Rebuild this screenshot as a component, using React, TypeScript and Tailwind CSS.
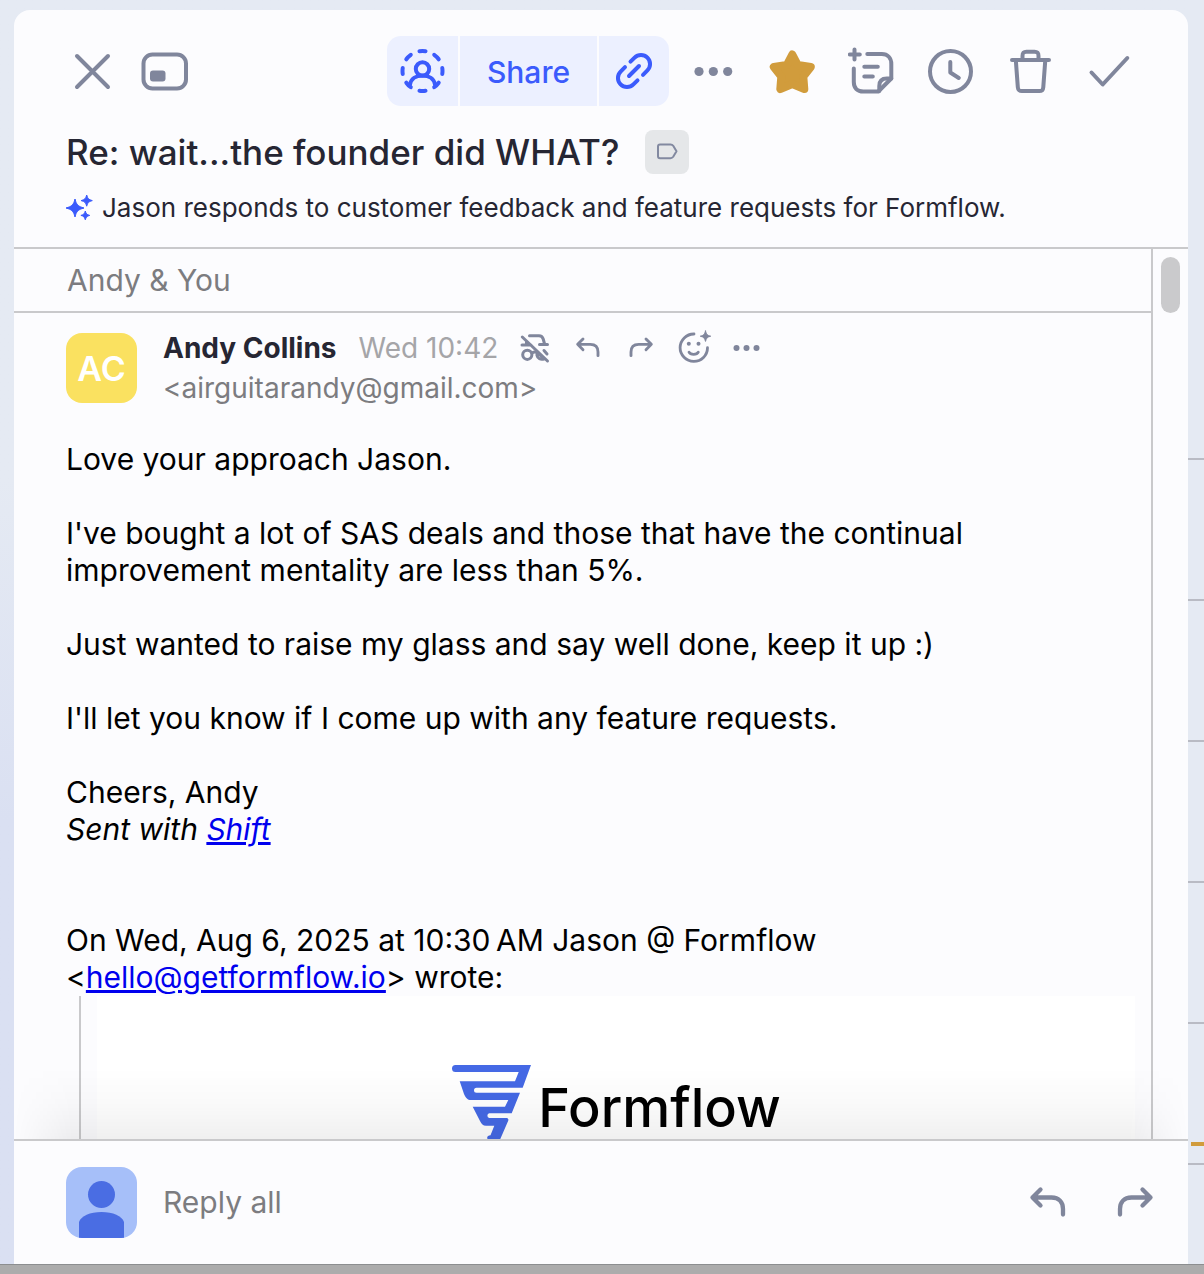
import type { ReactNode } from 'react';

const rows = [1, 2, 3, 4, 5];

function ReplyArrow({ className, flip }: { className: string; flip?: boolean }) {
  return (
    <svg className={className} viewBox="0 0 48 48" fill="none" stroke="currentColor" strokeWidth="4.3" strokeLinecap="round" strokeLinejoin="round">
      <g transform={flip ? 'translate(48 0) scale(-1 1)' : undefined}>
        <path d="M16.5 10.5 8.5 18.5l8 8M8.5 18.5h19C35 18.5 39 23 39 30v5.5" />
      </g>
    </svg>
  );
}

function Icon({ children }: { children: ReactNode }) {
  return (
    <svg className="size-12" viewBox="0 0 48 48" fill="none" stroke="currentColor" strokeWidth="4" strokeLinecap="round" strokeLinejoin="round">
      {children}
    </svg>
  );
}

function ToolButton({ label, children }: { label: string; children: ReactNode }) {
  return (
    <button aria-label={label} className="w-[79px] h-[70px] flex items-center justify-center">
      <Icon>{children}</Icon>
    </button>
  );
}

function MessageButton({ label, children }: { label: string; children: ReactNode }) {
  return (
    <button aria-label={label} className="w-[53px] h-8 flex items-center justify-center text-[#80869c]">
      {children}
    </button>
  );
}

function Toolbar() {
  return (
    <div className="flex items-center pl-[54px] pr-10 text-[#80869c]">
      <div className="flex gap-6">
        <button aria-label="Close">
          <Icon><path d="M9 9 40 40M40 9 9 40" /></Icon>
        </button>
        <button aria-label="Pop out">
          <Icon>
            <rect x="3.5" y="7.500" width="42.5" height="34" rx="9" />
            <rect x="10" y="23.500" width="15.5" height="11" rx="3" fill="currentColor" stroke="none" />
          </Icon>
        </button>
      </div>

      <div className="ml-auto mr-[5px] flex gap-0.5 rounded-[14px] overflow-hidden text-[#3b5bfc]">
        <button aria-label="Assign" className="w-[71px] h-[70px] bg-[#ecf0ff] flex items-center justify-center">
          <Icon>
            <circle cx="23.500" cy="24" r="20" pathLength="160" strokeDasharray="8 12" strokeDashoffset="4" />
            <circle cx="23.500" cy="22" r="6.700" />
            <path d="M11 37.500c1-5.500 6-9 12.500-9S35 32 36 37.500" />
          </Icon>
        </button>
        <button className="w-[137px] h-[70px] bg-[#ecf0ff] text-[30px] font-medium pt-[3px]">Share</button>
        <button aria-label="Copy link" className="w-[70px] h-[70px] bg-[#ecf0ff] flex items-center justify-center">
          <Icon>
            <path d="M20.500 14.700 24.600 10.600A9 9 0 0 1 37.400 23.400L33 27.800M27.500 33.300 23.400 37.400A9 9 0 0 1 10.600 24.600L15 20.200M19 29 29 19" />
          </Icon>
        </button>
      </div>

      <ToolButton label="More">
        <g fill="currentColor" stroke="none">
          <circle cx="9" cy="24.500" r="4.600" />
          <circle cx="23.300" cy="24.500" r="4.600" />
          <circle cx="37.700" cy="24.500" r="4.600" />
        </g>
      </ToolButton>
      <ToolButton label="Star">
        <path d="M23.300 7.500 28.800 18 41.800 20 34.300 29.500 35.300 42 23.300 37 11.300 42 12.300 29.500 4.800 20 17.800 18Z" fill="#d19c3c" stroke="#d19c3c" strokeWidth="8" />
      </ToolButton>
      <ToolButton label="Add note">
        <path d="M6.500 2.500v10M1.800 7.500h10M19.300 7h14.500c6 0 9.500 4 9.500 10v14.500l-13 13H15.300c-6 0-9.500-3.500-9.500-9.500V21.500" />
        <path d="M16.300 19.700h13.500M16.300 29.500h8.500M43.300 31.500h-4.500c-5 0-7.500 2.500-7.500 7.500v5" />
      </ToolButton>
      <ToolButton label="Snooze">
        <circle cx="23.500" cy="24.500" r="20.500" />
        <path d="M23.300 15v10.500l8.500 5.500" />
      </ToolButton>
      <ToolButton label="Delete">
        <path d="M6 13h37M9.800 13l2 27c.2 3 1.200 4 4 4h17.500c2.800 0 3.800-1 4-4l2-27M16.500 13V9c0-3 1-4.300 4-4.300h8c3 0 4 1.300 4 4.300v4" />
      </ToolButton>
      <ToolButton label="Mark done">
        <path d="M6.500 25.500 17.700 37.500 42.300 11" />
      </ToolButton>
    </div>
  );
}

function MessageHeader() {
  return (
    <div className="flex items-start gap-[26px]">
      <div className="mt-[5px] w-[71px] h-[70px] shrink-0 rounded-2xl bg-[#fae160] text-white text-[34px] font-semibold flex items-center justify-center">AC</div>
      <div>
        <div className="flex items-center h-10">
          <span className="text-[28px] font-bold text-[#262633]">Andy Collins</span>
          <time className="ml-[22px] mr-[10px] text-[28px] text-[#a5a5a8]">Wed 10:42</time>
          <MessageButton label="Trackers blocked">
            <svg className="size-8" viewBox="0 0 32 32" fill="none" stroke="currentColor" strokeWidth="3" strokeLinecap="round" strokeLinejoin="round">
              <path d="M3.300 5 28.500 29M3 13h9M20.500 12.500h8M10.500 3.700h9.500c2.700 0 3.500 1 4.200 3.300l1.500 5.500M7.500 9.500v3" />
              <circle cx="8.300" cy="22.800" r="4.600" />
              <path d="M13 21c2-1.300 3.500-1.300 5-.2v2.700c.6 3 3.500 4.500 7 3.500l-5.500-5.500M25 18.500l3 3.500" />
            </svg>
          </MessageButton>
          <MessageButton label="Reply">
            <ReplyArrow className="size-8" />
          </MessageButton>
          <MessageButton label="Forward">
            <ReplyArrow className="size-8" flip />
          </MessageButton>
          <MessageButton label="Add reaction">
            <svg className="size-8 overflow-visible" viewBox="0 0 32 32" fill="none" stroke="currentColor" strokeWidth="2.8" strokeLinecap="round">
              <path d="M16 2A13.700 13.700 0 1 0 29.500 15.700M11 20.200c1.500 3 7.800 3 9.300 0" />
              <g fill="currentColor" stroke="none">
                <circle cx="10.800" cy="11.800" r="2" />
                <circle cx="20.500" cy="11.800" r="2" />
                <path d="M27.500-1c.9 3.500 1.700 4.300 5.200 5.200-3.500.9-4.300 1.700-5.200 5.200-.9-3.500-1.700-4.300-5.200-5.200 3.500-.9 4.300-1.700 5.200-5.200Z" stroke="currentColor" strokeWidth="1" />
              </g>
            </svg>
          </MessageButton>
          <MessageButton label="More actions">
            <svg className="size-8" viewBox="0 0 32 32" fill="currentColor">
              <circle cx="5.500" cy="16" r="3" />
              <circle cx="15.500" cy="16" r="3" />
              <circle cx="25.500" cy="16" r="3" />
            </svg>
          </MessageButton>
        </div>
        <div className="h-10 flex items-center text-[28px] text-[#7c7c80]">&lt;airguitarandy@gmail.com&gt;</div>
      </div>
    </div>
  );
}

function FormflowLogo() {
  return (
    <div className="flex items-start justify-center gap-1.5">
      <svg className="w-[81px] h-[76px]" viewBox="0 0 81 76" fill="#4569e5">
        <path d="M4.500 1H80L71.700 23.700H25.500a2.500 2.500 0 0 0 0 5H69L60.700 49.300H38.300a2.400 2.400 0 0 0 0 4.700H55c2 0 2.800 1 2.200 2.700L49.300 75H36.500c-1-2 .5-3.500 3-3.700L43.300 61.700H35c-3 0-4.500-1.500-6-4.700L21.700 42.700H54L57.300 36H20c-3.500 0-5-2-7-6L8.700 17.300H64L67.700 8H4.500a3.500 3.500 0 0 1 0-7Z" />
      </svg>
      <span className="mt-[11px] text-[54px] leading-[66px] font-medium text-black">Formflow</span>
    </div>
  );
}

export default function App() {
  return (
    <div className="h-screen flex flex-col overflow-hidden bg-[#acacac] font-['Inter',sans-serif]">
      <div className="flex-1 min-h-0 flex pl-3.5 bg-linear-to-b from-[#e5eaf3] from-38% to-[#dae0f2] to-65% border-b border-[#8c8e90]">
        <main className="flex-1 min-w-0 mt-2.5 flex flex-col rounded-t-2xl bg-[#fcfcfe]">
          <header className="pt-[26px] pb-[23px] border-b-2 border-[#c9c9cb]">
            <Toolbar />
            <div className="mt-6 pl-[52px] flex items-center gap-[26px]">
              <h1 className="text-[35px] leading-11 font-medium text-[#262633]">Re: wait...the founder did WHAT?</h1>
              <button aria-label="Labels" className="size-11 rounded-lg bg-[#e5e7e9] text-[#8289a0]">
                <svg className="size-11" viewBox="0 0 44 44" fill="none" stroke="currentColor" strokeWidth="2" strokeLinejoin="round">
                  <path d="M15 14.500h10.500c1.300 0 2 .3 2.700 1.300l3.300 5.500-3.300 5.500c-.7 1-1.400 1.400-2.700 1.400H15c-1.300 0-2-.7-2-2v-9.700c0-1.300.7-2 2-2Z" />
                </svg>
              </button>
            </div>
            <p className="mt-[18px] pl-[52px] flex items-center gap-2 text-[26px] leading-8 text-[#262633]">
              <svg className="size-7 shrink-0" viewBox="0 0 28 28" fill="#3b5bfc" stroke="#3b5bfc" strokeWidth="1" strokeLinejoin="round">
                <path d="M9 5c1.500 6 3 7.300 9 9-6 1.700-7.500 3-9 9-1.500-6-3-7.300-9-9 6-1.700 7.500-3 9-9ZM20.700 1c1 3.700 1.900 4.600 5.600 5.600-3.700 1-4.600 1.900-5.600 5.600-1-3.700-1.900-4.600-5.600-5.600 3.700-1 4.600-1.900 5.600-5.600ZM19.300 17c.8 2.900 1.500 3.600 4.400 4.400-2.900.8-3.600 1.500-4.400 4.400-.8-2.900-1.500-3.600-4.400-4.400 2.900-.8 3.600-1.500 4.400-4.400Z" />
              </svg>
              Jason responds to customer feedback and feature requests for Formflow.
            </p>
          </header>

          <div className="relative flex-1 min-h-0 flex">
            <div className="flex-1 min-w-0 border-r-2 border-[#c9c9cb] overflow-hidden">
              <div className="h-16 pl-[53px] flex items-center border-b-2 border-[#c9c9cb] text-[30px] text-[#7c7c80]">Andy &amp; You</div>
              <article className="pt-[15px] pl-[52px] pr-4">
                <MessageHeader />
                <div className="mt-[33px] text-[30px] leading-[37px] text-black">
                  <p>Love your approach Jason.</p>
                  <p className="mt-[37px] max-w-[940px]">I've bought a lot of SAS deals and those that have the continual improvement mentality are less than 5%.</p>
                  <p className="mt-[37px]">Just wanted to raise my glass and say well done, keep it up :)</p>
                  <p className="mt-[37px]">I'll let you know if I come up with any feature requests.</p>
                  <p className="mt-[37px]">Cheers, Andy</p>
                  <p className="italic">Sent with <a href="#shift" className="text-[#0000ee] underline">Shift</a></p>
                  <p className="mt-[74px]">On Wed, Aug 6, 2025 at 10:30&#8239;AM Jason @ Formflow</p>
                  <p>&lt;<a href="mailto:hello@getformflow.io" className="text-[#0000ee] underline">hello@getformflow.io</a>&gt; wrote:</p>
                </div>
                <blockquote className="ml-[13px] border-l-2 border-[#c9c9cb] pl-4">
                  <div className="bg-white pt-[68px] pb-16">
                    <FormflowLogo />
                  </div>
                </blockquote>
              </article>
            </div>
            <div className="w-[35px] pt-2 pl-2">
              <div className="w-[19px] h-14 rounded-full bg-[#cacacc]" />
            </div>
            <div className="absolute inset-x-0 bottom-0 h-[72px] bg-linear-to-b from-black/0 via-black/2 to-black/6 mask-x-from-95% pointer-events-none" />
          </div>

          <footer className="border-t-2 border-[#c9c9cb] h-[125px] pl-[52px] pr-[29px] flex items-center">
            <svg className="size-[71px] rounded-2xl bg-[#a6bff9]" viewBox="0 0 71 71" fill="#4a6de3">
              <circle cx="35.500" cy="27.500" r="13.500" />
              <path d="M13 71V55c2-6 11-10 22.500-10S56 49 58 55v16Z" />
            </svg>
            <input aria-label="Reply all" placeholder="Reply all" className="ml-[26px] flex-1 min-w-0 bg-transparent outline-none text-[30px] placeholder:text-[#7c7c80]" />
            <div className="flex gap-[39px] text-[#80869c]">
              <button aria-label="Reply"><ReplyArrow className="size-12" /></button>
              <button aria-label="Forward"><ReplyArrow className="size-12" flip /></button>
            </div>
          </footer>
        </main>

        {/* edge of the list behind the panel */}
        <aside className="w-4 shrink-0 pt-[458px] bg-[#e5eaf3]">
          <div className="border-t-2 border-[#b9bbc4]" />
          {rows.map((row) => (
            <div key={row} className="relative h-[141px] border-b-2 border-[#b9bbc4]">
              {row === 5 && <div className="absolute left-[3px] right-0 bottom-[17px] h-1 bg-[#d19c3c]" />}
            </div>
          ))}
        </aside>
      </div>
      <div className="h-[9px] shrink-0" />
    </div>
  );
}
